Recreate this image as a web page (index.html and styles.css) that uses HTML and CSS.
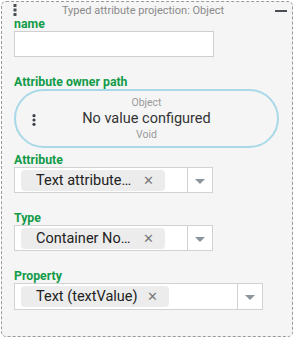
FILE: index.html
```html
<!DOCTYPE html>
<html lang="en">
<head>
    <meta charset="UTF-8">
    <meta name="viewport" content="width=device-width, initial-scale=1.0">
    <title>Typed attribute projection</title>
    <link rel="stylesheet" href="styles.css">
</head>
<body>
    <div class="panel">
        <div class="panel-header">
            <span class="menu-dots">
                <svg width="4" height="12" viewBox="0 0 4 12"><rect x="0.5" y="0" width="3" height="3" fill="#4a4f55"/><rect x="0.5" y="4.5" width="3" height="3" fill="#4a4f55"/><rect x="0.5" y="9" width="3" height="3" fill="#4a4f55"/></svg>
            </span>
            <span class="panel-title">Typed attribute projection: Object</span>
            <span class="collapse-btn"></span>
        </div>

        <!-- name -->
        <div class="field">
            <label class="field-label">name</label>
            <input type="text" class="text-input">
        </div>

        <!-- Attribute owner path -->
        <div class="field field-tight">
            <label class="field-label">Attribute owner path</label>
            <div class="path-pill">
                <span class="pill-dots">
                    <svg width="4" height="12" viewBox="0 0 4 12"><circle cx="2" cy="1.7" r="1.6" fill="#3d4248"/><circle cx="2" cy="6" r="1.6" fill="#3d4248"/><circle cx="2" cy="10.3" r="1.6" fill="#3d4248"/></svg>
                </span>
                <span class="pill-sub">Object</span>
                <span class="pill-main">No value configured</span>
                <span class="pill-sub">Void</span>
            </div>
        </div>

        <!-- Attribute -->
        <div class="field">
            <label class="field-label">Attribute</label>
            <div class="select">
                <div class="select-value">
                    <span class="chip"><span class="chip-text">Text attribute projection</span><span class="chip-x">&#x2715;</span></span>
                </div>
                <div class="select-arrow"><span class="caret"></span></div>
            </div>
        </div>

        <!-- Type -->
        <div class="field">
            <label class="field-label">Type</label>
            <div class="select">
                <div class="select-value">
                    <span class="chip"><span class="chip-text">Container Node</span><span class="chip-x">&#x2715;</span></span>
                </div>
                <div class="select-arrow"><span class="caret"></span></div>
            </div>
        </div>

        <!-- Property -->
        <div class="field">
            <label class="field-label">Property</label>
            <div class="select select-wide">
                <div class="select-value">
                    <span class="chip"><span class="chip-text">Text (textValue)</span><span class="chip-x">&#x2715;</span></span>
                </div>
                <div class="select-arrow"><span class="caret"></span></div>
            </div>
        </div>
    </div>
</body>
</html>
```

FILE: styles.css
```css
body {
    margin: 0;
    padding: 0;
    background-color: #ffffff;
    font-family: Roboto, "Liberation Sans", Arial, sans-serif;
}
.panel {
    box-sizing: border-box;
    width: 292px;
    height: 336px;
    margin: 1px;
    padding: 0 12px;
    border: 1px dashed #9a9a9a;
    border-radius: 5px;
    background-color: #f5f5f5;
}
.panel-header {
    display: flex;
    align-items: center;
    height: 15px;
    margin: 0 -12px;
    padding: 0 5px 0 11px;
}
.menu-dots {
    display: flex;
    width: 4px;
}
.panel-title {
    flex: 1;
    text-align: center;
    font-size: 11px;
    color: #8a8a8a;
    padding-top: 1px;
    margin-right: 6px;
}
.collapse-btn {
    width: 12px;
    height: 2px;
    margin-top: 3px;
    background-color: #4a4f55;
}
.field {
    margin-bottom: 18px;
}
.field-tight {
    margin-bottom: 5px;
}
.field-label {
    display: block;
    font-size: 12.3px;
    font-weight: bold;
    line-height: 14px;
    color: #129b48;
}
.text-input {
    display: block;
    box-sizing: border-box;
    width: 200px;
    height: 26px;
    margin: 0;
    border: 1px solid #cfcfcf;
    background-color: #fff;
}
.path-pill {
    position: relative;
    box-sizing: border-box;
    width: 265px;
    height: 59px;
    border: 2px solid #a9d9e8;
    border-radius: 30px;
    display: flex;
    flex-direction: column;
    align-items: center;
    justify-content: center;
}
.pill-dots {
    position: absolute;
    left: 16px;
    top: 23px;
    display: flex;
}
.pill-sub {
    font-size: 10.5px;
    line-height: 14px;
    color: #9a9a9a;
}
.pill-main {
    font-size: 14.5px;
    line-height: 18px;
    color: #333;
}
.select {
    display: flex;
    box-sizing: border-box;
    width: 199px;
    height: 26px;
    border: 1px solid #d2d2d2;
    background-color: #fff;
}
.select-wide {
    width: 249px;
    height: 27px;
}
.select-value {
    flex: 1;
    display: flex;
    align-items: center;
    padding-left: 6px;
}
.chip {
    display: flex;
    align-items: center;
    height: 21px;
    padding: 0 11px 0 15px;
    border-radius: 4px;
    background-color: #ececec;
}
.chip-text {
    max-width: 98px;
    overflow: hidden;
    white-space: nowrap;
    text-overflow: ellipsis;
    font-size: 14.5px;
    color: #222;
}
.select-wide .chip-text {
    max-width: 130px;
}
.chip-x {
    margin-left: 9px;
    font-size: 13px;
    color: #7a7a7a;
}
.select-arrow {
    width: 24px;
    border-left: 1px solid #d2d2d2;
    display: flex;
    align-items: center;
    justify-content: center;
}
.caret {
    width: 0;
    height: 0;
    margin-top: 2px;
    border-left: 5px solid transparent;
    border-right: 5px solid transparent;
    border-top: 5px solid #8c949c;
}
```
